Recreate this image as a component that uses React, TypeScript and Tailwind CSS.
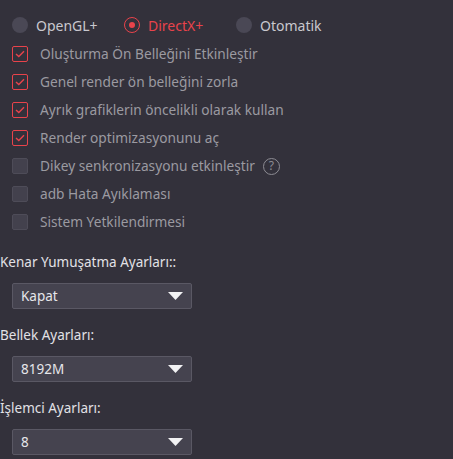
const font = { fontFamily: "'Noto Sans', sans-serif" };

const Radio = ({ label, checked }: { label: string; checked?: boolean }) => (
  <div className="w-[112px] flex items-center gap-[8px]">
    {checked ? (
      <span className="w-[16px] h-[16px] rounded-full border border-[#e8434b] flex items-center justify-center">
        <span className="w-[6px] h-[6px] rounded-full bg-[#e8434b]" />
      </span>
    ) : (
      <span className="w-[16px] h-[16px] rounded-full bg-[#4a4855]" />
    )}
    <span className={checked ? "text-[#e8434b]" : "text-[#c9c8ce]"}>{label}</span>
  </div>
);

const Checkbox = ({ label, checked, help }: { label: string; checked?: boolean; help?: boolean }) => (
  <div className="h-[28px] flex items-center">
    {checked ? (
      <span className="w-[16px] h-[16px] rounded-[2px] border border-[#e8434b] flex items-center justify-center">
        <svg width="10" height="8" viewBox="0 0 10 8" fill="none">
          <path d="M1 4l2.8 2.6L9 1.2" stroke="#e8434b" strokeWidth="1.4" />
        </svg>
      </span>
    ) : (
      <span className="w-[16px] h-[16px] rounded-[2px] bg-[#43414d] border border-[#4e4c58]" />
    )}
    <span className="ml-[12px] text-[#9b9aa1]">{label}</span>
    {help && (
      <span className="ml-[8px] w-[17px] h-[17px] rounded-full border border-[#8d8c93] text-[#8d8c93] text-[12px] leading-none flex items-center justify-center">
        ?
      </span>
    )}
  </div>
);

const Select = ({ value }: { value: string }) => (
  <div className="ml-[12px] w-[180px] h-[26px] rounded-[2px] bg-[#45434f] border border-[#5a5864] flex items-center justify-between pl-[8px] pr-[8px]">
    <span className="text-[#e6e6ea]">{value}</span>
    <svg width="15" height="8" viewBox="0 0 15 8">
      <path d="M0 0h15L7.5 8z" fill="#f2f2f4" />
    </svg>
  </div>
);

const Field = ({ label, value }: { label: string; value: string }) => (
  <div className="mt-[15px]">
    <div className="h-[22px] flex items-center text-[#e2e1e6] mb-[10px]">{label}</div>
    <Select value={value} />
  </div>
);

export default function App() {
  return (
    <div className="w-[453px] h-[459px] bg-[#33313b] overflow-hidden text-[13.5px]" style={font}>
      <div className="pl-[12px] pt-[11px]">
        <div className="h-[28px] flex items-center text-[14px]">
          <Radio label="OpenGL+" />
          <Radio label="DirectX+" checked />
          <Radio label="Otomatik" />
        </div>
        <div className="mt-[1px] text-[13.7px]">
          <Checkbox label="Oluşturma Ön Belleğini Etkinleştir" checked />
          <Checkbox label="Genel render ön belleğini zorla" checked />
          <Checkbox label="Ayrık grafiklerin öncelikli olarak kullan" checked />
          <Checkbox label="Render optimizasyonunu aç" checked />
          <Checkbox label="Dikey senkronizasyonu etkinleştir" help />
          <Checkbox label="adb Hata Ayıklaması" />
          <Checkbox label="Sistem Yetkilendirmesi" />
        </div>
      </div>
      <Field label="Kenar Yumuşatma Ayarları::" value="Kapat" />
      <Field label="Bellek Ayarları:" value="8192M" />
      <Field label="İşlemci Ayarları:" value="8" />
    </div>
  );
}
